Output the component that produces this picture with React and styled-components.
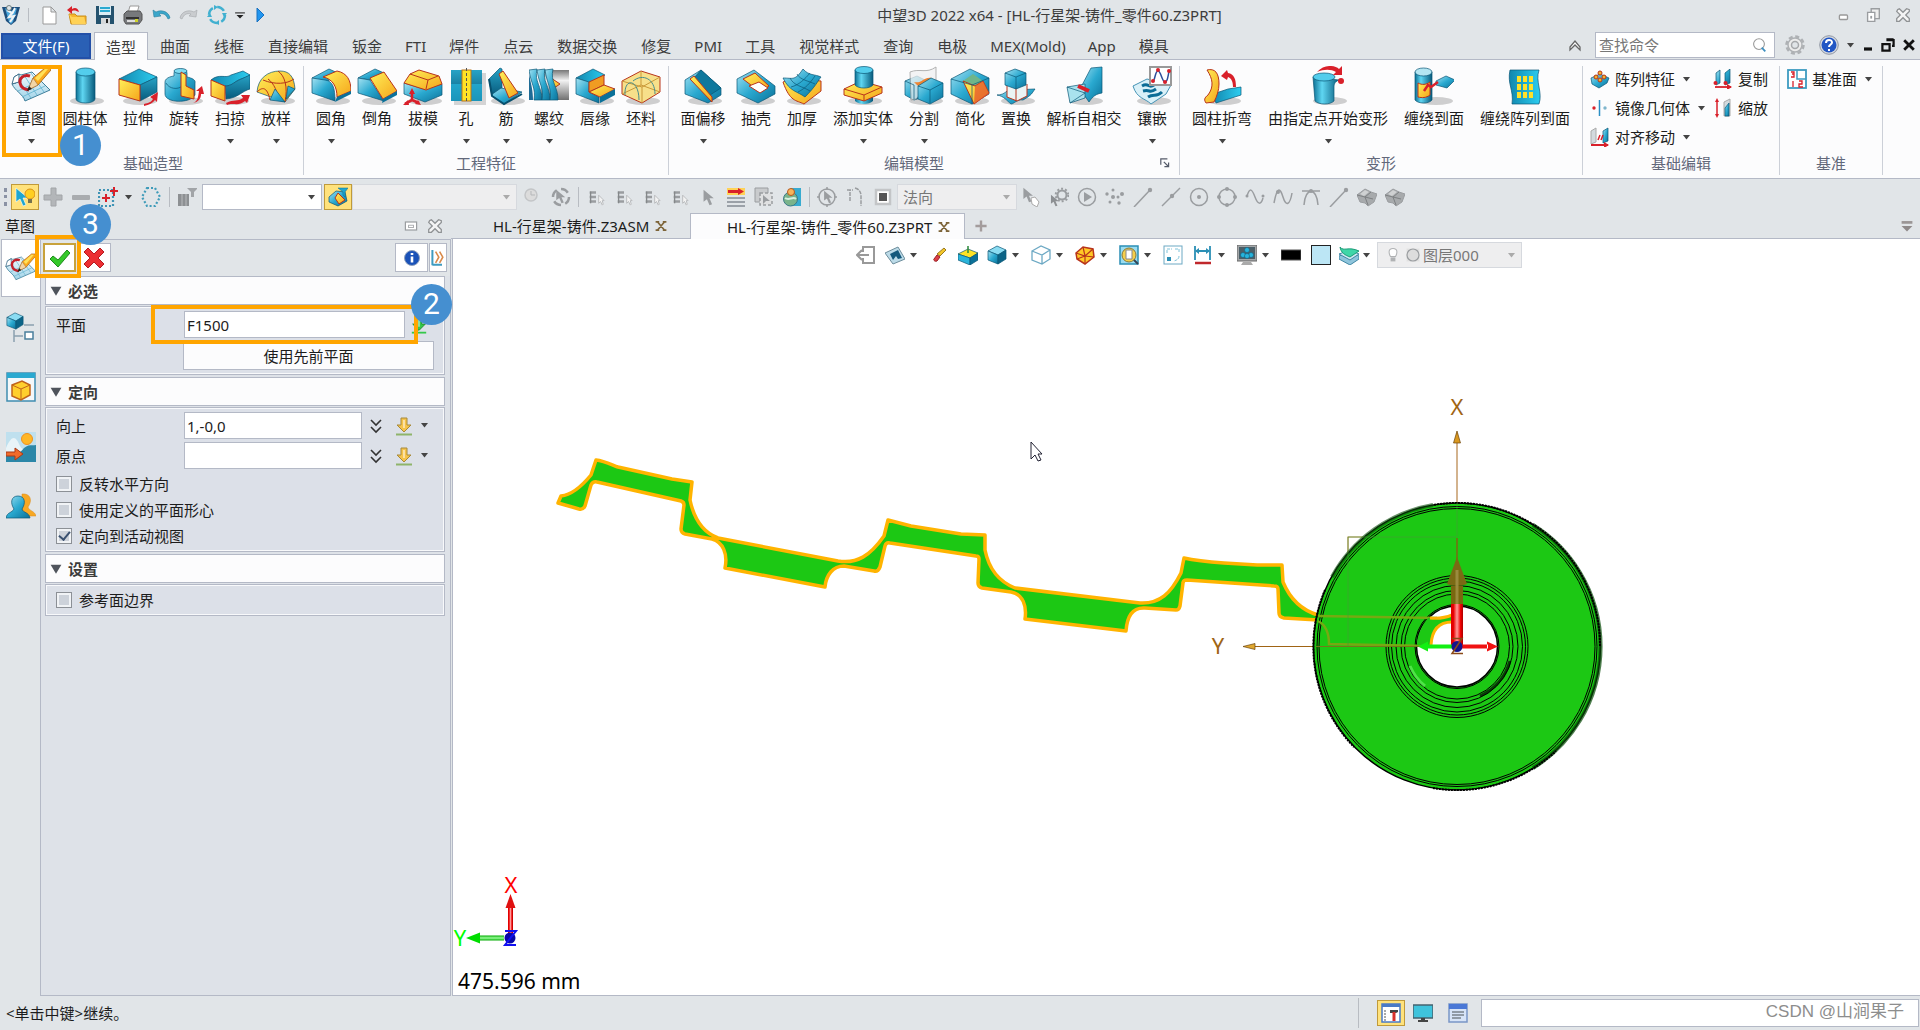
import React, { useState } from 'react'
import styled, { createGlobalStyle, css } from 'styled-components'

const GlobalStyle = createGlobalStyle`
    * { box-sizing: border-box; }
    body {
        margin: 0;
        font-family: "Noto Sans", "Noto Sans CJK SC", sans-serif;
        font-size: 15px;
        line-height: 20px;
        color: #1c1c1c;
        background: #e1e5e8;
    }
    button, input, select { font: inherit; color: inherit; }
    svg { display: block; flex: none; }
`

const line = '#b4b9c6'

const Page = styled.div`
    display: flex;
    flex-direction: column;
    height: 100vh;
    overflow: hidden;
`

const PlainButton = styled.button`
    display: flex;
    align-items: center;
    justify-content: ${p => (p.$start ? 'flex-start' : 'center')};
    flex: none;
    width: ${p => p.$w || 28}px;
    height: 26px;
    padding: 0;
    border: 0;
    background: none;
    ${p => p.$active && css`
        background: #ffe27c;
        border: 1px solid #c09a3a;
    `}
`

const TitleBar = styled.header`
    display: flex;
    align-items: center;
    height: 32px;
    flex: none;
    padding: 0 2px 2px 0;
`
const Title = styled.h1`
    flex: 1;
    margin: 0;
    font-size: 15px;
    font-weight: 400;
    text-align: center;
    color: #3c3c3c;
`
const Divider = styled.span`
    flex: none;
    width: 1px;
    height: ${p => p.$h || 20}px;
    margin: 0 ${p => p.$m || 2}px;
    background: #b8bcc2;
`

const MenuRow = styled.nav`
    display: flex;
    height: 28px;
    flex: none;
    border-bottom: 1px solid ${line};
`
const FileTab = styled.button`
    width: 90px;
    margin: 1px 3px 0 1px;
    padding: 0;
    color: #fff;
    background: #2a60b5;
    border: 2px solid #2350a8;
`
const MenuTab = styled.button`
    height: 28px;
    flex: none;
    padding: 0 ${p => (p.$latin ? 11 : 12)}px;
    color: #3c3c3c;
    background: none;
    border: 0;
    ${p => p.$active && css`
        padding: 0 11px;
        background: #fcfcfd;
        border: 1px solid ${line};
        border-bottom: 0;
    `}
`
const Spacer = styled.span`
    flex: 1;
`
const SearchBox = styled.label`
    display: flex;
    align-items: center;
    flex: none;
    width: 180px;
    height: 26px;
    margin: 0 6px;
    padding: 0 6px 0 3px;
    background: #fff;
    border: 1px solid ${line};
    input {
        flex: 1;
        min-width: 0;
        padding: 0;
        border: 0;
        outline: 0;
        background: none;
    }
    input::placeholder { color: #777; opacity: 1; }
`
const HelpButton = styled(PlainButton)`
    gap: 8px;
    margin-left: 5px;
`

const Ribbon = styled.section`
    display: flex;
    height: 119px;
    flex: none;
    background: #fcfcfd;
    border-bottom: 1px solid ${line};
`
const Group = styled.div`
    display: flex;
    flex-direction: column;
    position: relative;
    flex: none;
    margin: 6px 0 3px;
    padding: 0 4px 0 ${p => p.$pl || 4}px;
    border-right: 1px solid #ccd0d8;
`
const GroupTools = styled.div`
    display: flex;
    height: 87px;
`
const GroupName = styled.div`
    padding-right: ${p => (p.$corner ? 20 : 0)}px;
    text-align: center;
    color: #62687a;
`
const CornerButton = styled.button`
    position: absolute;
    right: 6px;
    bottom: 4px;
    padding: 2px;
    border: 0;
    background: none;
`
const BigButton = styled.button`
    display: flex;
    flex-direction: column;
    align-items: center;
    position: relative;
    width: ${p => p.$w}px;
    flex: none;
    padding: 0;
    border: 0;
    background: none;
    white-space: nowrap;
    line-height: 24px;
    & > svg:last-child { margin-top: 9px; }
`
const SmallGrid = styled.div`
    display: grid;
    grid-template-columns: ${p => p.$cols};
    grid-auto-rows: 26px;
    row-gap: 3px;
    align-content: start;
    padding-left: 3px;
`
const SmallButton = styled.button`
    display: flex;
    align-items: center;
    gap: 5px;
    padding: 0;
    border: 0;
    background: none;
    white-space: nowrap;
    & > svg:nth-child(3) { margin-left: 3px; }
`

const ToolRow = styled.div`
    display: flex;
    align-items: center;
    height: 34px;
    flex: none;
    padding: 2px 0 0 4px;
`
const Grip = styled.span`
    width: 0;
    height: 18px;
    margin-right: 4px;
    border-left: 3px dotted #8a92a4;
`
const SelectBox = styled.span`
    display: flex;
    align-items: center;
    flex: none;
    width: ${p => p.$w}px;
    height: 26px;
    padding: 0 6px 0 3px;
    margin: 0 ${p => p.$mr || 0}px 0 0;
    background: ${p => (p.$off ? '#eeeeef' : '#fff')};
    border: 1px solid ${p => (p.$off ? '#d6d9de' : line)};
    color: #777;
    select {
        flex: 1;
        min-width: 0;
        padding: 0;
        margin-left: 2px;
        appearance: none;
        border: 0;
        outline: 0;
        background: none;
        opacity: 1;
        color: #777;
    }
`

const Main = styled.main`
    display: flex;
    flex: 1;
    min-height: 0;
`
const Side = styled.aside`
    display: flex;
    flex-direction: column;
    width: 451px;
    flex: none;
`
const SideHead = styled.div`
    display: flex;
    align-items: center;
    height: 26px;
    flex: none;
    padding: 0 4px 0 5px;
`
const SideBody = styled.div`
    display: flex;
    flex: 1;
    min-height: 0;
`
const IconRail = styled.div`
    display: flex;
    flex-direction: column;
    width: 39px;
    flex: none;
    margin-left: 1px;
`
const RailButton = styled.button`
    display: flex;
    align-items: center;
    justify-content: center;
    height: ${p => (p.$active ? 58 : 60)}px;
    padding: 0;
    background: none;
    border: 0;
    ${p => p.$active && css`
        background: #fff;
        border: 1px solid ${line};
        border-right: 0;
    `}
`
const Panel = styled.div`
    flex: 1;
    min-width: 0;
    padding: 0 5px 0 4px;
    background: #dee2e8;
    border: 1px solid ${line};
`
const PanelBar = styled.div`
    display: flex;
    gap: 1px;
    align-items: center;
    height: 36px;
    margin: 0 -5px 0 -4px;
    padding: 0 3px 1px 2px;
    background: #e1e5e8;
`
const BoxButton = styled.button`
    display: flex;
    align-items: center;
    justify-content: center;
    position: relative;
    width: ${p => p.$w}px;
    height: 29px;
    padding: 0;
    background: #fff;
    border: ${p => (p.$hot ? '2px solid #c8a23c' : `1px solid ${line}`)};
`
const SectionHead = styled.button`
    display: flex;
    align-items: center;
    gap: 6px;
    width: 100%;
    height: 29px;
    padding: 0 4px;
    background: #fcfcfd;
    border: 1px solid ${line};
    font-weight: 700;
    color: #3c3c3c;
`
const SectionBody = styled.div`
    display: flex;
    flex-direction: column;
    gap: 3px;
    margin: 1px 0 2px;
    padding: ${p => p.$pad || '4px 10px'};
    background: #dce0e8;
    border: 1px solid ${line};
    box-shadow: inset 0 0 0 1px #f8f9fb;
`
const Field = styled.div`
    display: flex;
    align-items: center;
    position: relative;
    label {
        width: 128px;
        flex: none;
    }
`
const TextInput = styled.input`
    width: ${p => p.$w}px;
    height: 27px;
    padding: 0 2px;
    background: #fff;
    border: 1px solid ${line};
    outline: 0;
`
const WideButton = styled.button`
    height: 29px;
    margin: 0 0 0 127px;
    background: #fcfcfd;
    border: 1px solid ${line};
`
const Checks = styled.div`
    margin: -1px 0 -2px;
`
const Check = styled.label`
    display: flex;
    align-items: center;
    gap: 7px;
    height: 26px;
    input {
        display: grid;
        place-items: center;
        width: 16px;
        height: 16px;
        margin: 0;
        appearance: none;
        background: #cdd2da;
        border: 1px solid #8c9096;
        box-shadow: inset 0 0 0 2px #f1f3f6;
    }
    input:checked::after {
        content: "";
        width: 5px;
        height: 9px;
        margin-bottom: 3px;
        border: solid #3a5070;
        border-width: 0 2px 2px 0;
        transform: rotate(40deg);
    }
`

/* step highlights drawn over the controls */
const Highlight = styled.span`
    position: absolute;
    left: ${p => p.$l}px;
    top: ${p => p.$t}px;
    width: ${p => p.$w}px;
    height: ${p => p.$h}px;
    border: 4px solid #ffa500;
    pointer-events: none;
    z-index: 1;
`
const Step = styled.span`
    position: absolute;
    left: ${p => p.$l}px;
    top: ${p => p.$t}px;
    width: 41px;
    height: 41px;
    border-radius: 50%;
    background: #458fd0;
    color: #fff;
    font: 30px/40px Roboto, sans-serif;
    text-align: center;
    z-index: 2;
`

const Work = styled.div`
    display: flex;
    flex-direction: column;
    flex: 1;
    min-width: 0;
`
const DocTabs = styled.div`
    display: flex;
    height: 26px;
    flex: none;
    border-bottom: 1px solid ${line};
`
const DocTab = styled.div`
    display: flex;
    align-items: center;
    gap: 6px;
    height: 26px;
    flex: none;
    width: ${p => p.$w}px;
    padding-left: ${p => p.$pl}px;
    white-space: nowrap;
    button { height: 20px; width: 12px; }
    ${p => p.$active && css`
        background: #fcfcfd;
        border: 1px solid ${line};
        border-bottom: 0;
    `}
`
const DocLink = styled.a`
    color: #1c1c1c;
    text-decoration: none;
`
const Canvas = styled.div`
    position: relative;
    flex: 1;
    min-height: 0;
    overflow: hidden;
    margin-left: 1px;
    background: #fff;
    border-bottom: 1px solid ${line};
    border-left: 1px solid ${line};
`
const Scene = styled.svg`
    width: 100%;
    height: 100%;
    font-family: "Noto Sans", sans-serif;
`
const ViewBar = styled.div`
    display: flex;
    align-items: center;
    position: absolute;
    left: 398px;
    top: 3px;
`

const StatusBar = styled.footer`
    display: flex;
    align-items: center;
    height: 34px;
    flex: none;
    padding: 0 1px 0 6px;
`
const StatusInput = styled.label`
    position: relative;
    width: 438px;
    height: 28px;
    margin-left: 6px;
    background: #fff;
    border: 1px solid ${line};
    input {
        width: 100%;
        height: 100%;
        border: 0;
        outline: 0;
        background: none;
    }
`
const Watermark = styled.span`
    position: absolute;
    right: 14px;
    top: 0;
    font: 17px/24px "Liberation Sans", "Noto Sans CJK SC", sans-serif;
    color: #8d8d8d;
`

/* ---------- icons ---------- */

const Defs = () => (
    <svg width="0" height="0" style={{ position: 'absolute' }} aria-hidden="true">
        <defs>
            <linearGradient id="bl" x1="0" y1="0" x2="1" y2="1">
                <stop offset="0" stopColor="#a5e2f2" /><stop offset=".5" stopColor="#2aa9d0" /><stop offset="1" stopColor="#0b7199" />
            </linearGradient>
            <linearGradient id="bt" x1="0" y1="0" x2="1" y2="0">
                <stop offset="0" stopColor="#1287ae" /><stop offset="1" stopColor="#2ccdf0" />
            </linearGradient>
            <linearGradient id="bd" x1="0" y1="0" x2="0" y2="1">
                <stop offset="0" stopColor="#28a3c6" /><stop offset="1" stopColor="#075a7c" />
            </linearGradient>
            <linearGradient id="cy" x1="0" y1="0" x2="1" y2="0">
                <stop offset="0" stopColor="#0b6f93" /><stop offset=".35" stopColor="#5fd6f2" /><stop offset="1" stopColor="#075a7c" />
            </linearGradient>
            <linearGradient id="ye" x1="0" y1="0" x2="1" y2="1">
                <stop offset="0" stopColor="#fff05a" /><stop offset="1" stopColor="#f5a51a" />
            </linearGradient>
            <linearGradient id="gr" x1="0" y1="0" x2="0" y2="1">
                <stop offset="0" stopColor="#777" /><stop offset=".35" stopColor="#f2f2f2" /><stop offset="1" stopColor="#707070" />
            </linearGradient>
            <linearGradient id="pa" x1="0" y1="0" x2="0" y2="1">
                <stop offset="0" stopColor="#f4fafd" /><stop offset="1" stopColor="#9fd3e8" />
            </linearGradient>
            <linearGradient id="rd" x1="0" y1="0" x2="1" y2="0">
                <stop offset="0" stopColor="#d00" /><stop offset=".2" stopColor="#e80000" /><stop offset=".5" stopColor="#ff9a9a" /><stop offset=".8" stopColor="#f00000" /><stop offset="1" stopColor="#a00" />
            </linearGradient>
            <linearGradient id="gn" x1="0" y1="0" x2="0" y2="1">
                <stop offset="0" stopColor="#0a0" /><stop offset=".5" stopColor="#9f9" /><stop offset="1" stopColor="#0a0" />
            </linearGradient>
        </defs>
    </svg>
)

const shadow = <ellipse cx="22" cy="35" rx="17" ry="4" fill="#777" opacity=".35" />
const ed = { stroke: '#0a5676', strokeWidth: '.7', strokeLinejoin: 'round' }
const re = { stroke: '#b8341c', strokeWidth: '1', strokeLinejoin: 'round' }

const pencil = (
    <>
        <path d="M3 11l5-3 2 1 11-3 18 18-25 11c-2-7-10-10-13-17l4-1z" fill="url(#pa)" stroke="#3f7f9b" />
        <path d="M3 11l5-3v8l-7 2z" fill="#fff" stroke="#3f6f8b" />
        <path d="M7 25l21-10M11 31l23-11M13 9l13 20M10 17l10 15M20 7l13 19" stroke="#5fb2cf" strokeWidth=".8" fill="none" />
        <path d="M19 10c-6-2-11 2-10 7 1 5 4 6 9 7" stroke="#c4202a" strokeWidth="3" fill="none" />
        <path d="M17 24l5-12 12-10h6l0 2-13 15z" fill="#f9a81e" stroke="#a55f12" strokeWidth=".8" />
        <path d="M24 12l10-9h3L27 15z" fill="#ffe15a" />
        <path d="M17 24l5-12 5 7z" fill="#f3d5a5" stroke="#8c6138" strokeWidth=".5" /><path d="M16 25l2-5 3 3z" fill="#222" />
    </>
)

const big = {
    sketch: pencil,
    cylinder: <>{shadow}<path d="M11 6v27a9.500 4 0 0 0 19 0V6z" fill="url(#cy)" {...ed} /><ellipse cx="20.500" cy="6" rx="9.500" ry="4" fill="#53cdec" {...ed} /></>,
    extrude: <>{shadow}<path d="M1 13l20-10 18 8-17 8z" fill="url(#bt)" {...ed} /><path d="M22 19l17-8v15L22 35z" fill="url(#bd)" {...ed} /><path d="M1 13l21 6v16L1 29z" fill="url(#ye)" {...re} /><path d="M26 38c5-1 7-2 9-5l-3-2 8-5-1 10-2-2c-2 3-6 5-11 6z" fill="#d9202a" /></>,
    revolve: <>{shadow}<path d="M1 16c0-5 9-6 9-6V7c0-5 13-5 13 0v4c5 1 9 3 8 6v12c-5 9-30 8-30-1z" fill="url(#bl)" {...ed} /><path d="M2 17c3 6 12 7 16 3V10" fill="none" {...ed} /><ellipse cx="16.500" cy="5" rx="6.500" ry="2.500" fill="#7fdbf1" {...ed} /><path d="M17 6l5 3v11l8 4v9l-13-3z" fill="url(#ye)" {...re} /><path d="M29 37c5-2 5-6 6-12h-3l6-5 2 8h-3c0 5-3 8-8 9z" fill="#d9202a" /></>,
    sweep: <>{shadow}<path d="M1 14c8-7 15-1 20-5l12-4 7 4c-5 4-10 3-16 8-4 3-9 3-9 3z" fill="url(#bt)" {...ed} /><path d="M15 20c6 0 8-3 14-6l11-5v14c-8 2-12 9-24 10z" fill="url(#bd)" {...ed} /><path d="M1 14l14 6v15L1 30z" fill="url(#ye)" {...re} /><path d="M16 37c8-4 11-1 17-5l-2-3h9l-3 8-2-2c-7 6-12 1-18 4z" fill="#d9202a" /></>,
    loft: <>{shadow}<path d="M1 26C2 12 12 5 24 5c9 0 14 5 15 18L29 36z" fill="url(#ye)" {...ed} /><path d="M12 13c6 4 10 14 11 22M22 5c7 5 10 16 7 31M7 14c12 5 24 4 31-1M1 26c5-5 10-6 13 8" fill="none" {...re} /><path d="M14 34l5-11 10 13zM30 33l2-13 7 3z" fill="url(#bl)" {...ed} /></>,
    fillet: <>{shadow}<path d="M1 12L18 3l11 5-14 8z" fill="url(#bl)" {...ed} /><path d="M1 12l13 2c8 1 10 8 10 21L1 27z" fill="url(#bl)" {...ed} /><path d="M12 11l14-6c10 2 14 9 14 20l-14 6c0-10-4-18-14-20z" fill="url(#ye)" {...re} /><path d="M26 31l14-6v3L24 36z" fill="#0b7199" /></>,
    chamfer: <>{shadow}<path d="M1 12L18 3l9 4-14 7z" fill="url(#bl)" {...ed} /><path d="M1 12l12 2 14 21L1 27z" fill="url(#bl)" {...ed} /><path d="M13 12l14-6 13 19-14 8z" fill="url(#ye)" {...re} /><path d="M26 33l14-8v4L25 37z" fill="#0b7199" /></>,
    draft: <>{shadow}<path d="M1 17l20 6 18-5v11l-17 7-21-8z" fill="url(#bl)" {...ed} /><path d="M1 17L7 8l9-4 20 6 3 8-16 6z" fill="url(#ye)" {...re} /><path d="M7 8l18 6 10-4M25 14l-2 9" fill="none" {...re} /><path d="M9 25v9l-7 4M9 34l7 3" stroke="#d9202a" strokeWidth="2.600" fill="none" /><path d="M6 28l3-6 3 6zM0 39l5-5 1 5zM18 39l-6-1 3-4z" fill="#d9202a" /></>,
    hole: <><rect x="8" y="7" width="32" height="32" fill="#999" opacity=".4" /><rect x="5" y="4" width="31" height="31" fill="url(#bd)" /><rect x="5" y="18" width="31" height="17" fill="#28bce4" opacity=".6" /><rect x="16" y="4" width="9" height="31" fill="#ffe326" stroke="#b8741c" /><path d="M20.500 2v35" stroke="#555" strokeDasharray="3 2" /></>,
    rib: <>{shadow}<path d="M3 13L14 2l2 1v20l-10 7z" fill="url(#bd)" {...ed} /><path d="M5 29l10-7 21 4-18 12z" fill="url(#bl)" {...ed} /><path d="M13 8l4-3 15 22-9 5z" fill="url(#ye)" {...re} /><path d="M3 13l3 17 12 8 18-10" fill="none" stroke="#07506e" strokeWidth="2" /></>,
    thread: <><rect x="12" y="4" width="28" height="30" fill="url(#gr)" /><path d="M22 12l9 6-9 6z" fill="url(#ye)" {...re} />{[0, 8, 16].map(x => <path key={x} d={`M${x} 4c2 14 7 18 5 30h8c0-14-8-18-5-31z`} fill="url(#bl)" {...ed} />)}<path d="M0 8v26h4c0-10-2-16-4-26z" fill="#1f6c96" /></>,
    lip: <>{shadow}<path d="M1 12L18 3l12 6-15 8z" fill="url(#bt)" {...ed} /><path d="M1 12l13 4v10l10 5v6L1 28z" fill="url(#bl)" {...ed} /><path d="M14 16l15-7v10l-15 7z" fill="#f09c22" {...re} /><path d="M14 26l15-7 11 4-15 8z" fill="url(#ye)" {...re} /><path d="M25 31l15-8v6l-15 8z" fill="#0b7199" /></>,
    stock: <>{shadow}<path d="M1 15L20 5l19 6v15L21 37 1 28z" fill="#f7e08a" {...re} /><path d="M1 15l20 6 18-10M21 21v16M20 5v14L1 28M20 19l19 7" fill="none" stroke="#c99838" /><path d="M4 29c-1-18 14-16 14 5M12 15c10-8 22-2 22 13" fill="none" stroke="#478d8b" /></>,
    offset: <>{shadow}<path d="M2 14L18 4l20 18v7L25 37 2 28z" fill="url(#bl)" {...ed} /><path d="M18 4l20 18-11 7-16-17z" fill="#0e789d" {...ed} /><path d="M7 13l4-3 18 21v5z" fill="url(#ye)" {...re} /></>,
    shell: <>{shadow}<path d="M1 13L18 4l21 16v8L22 37 1 27z" fill="url(#bl)" {...ed} /><path d="M7 13l12-6 14 13-9 6z" fill="url(#ye)" {...re} /><path d="M13 20l10-4 9 6-8 5z" fill="#fff" {...re} /></>,
    thicken: <>{shadow}<path d="M1 16c10-4 15 4 20-8 8 6 8 6 18 7v10L22 38C14 34 8 36 1 16z" fill="url(#ye)" {...re} /><path d="M1 12c10 0 12 3 20-9 6 7 12 5 18 8-4 5-5 9-16 20C15 25 8 26 1 12z" fill="url(#bl)" {...ed} /><path d="M8 12c4 8 12 8 20 13M15 8c3 6 12 7 18 10M9 21c8-2 14-8 19-14M16 26c8-4 12-9 17-16" fill="none" {...ed} /></>,
    addbody: <>{shadow}<path d="M12 30h18v5c-4 4-14 4-18 0z" fill="url(#cy)" /><path d="M1 23l17-8 21 6v6l-18 8-20-6z" fill="url(#ye)" {...re} /><path d="M1 23l20 6 18-8M21 29v6" fill="none" {...re} /><path d="M12 4v15c3 4 15 4 18 0V4z" fill="url(#cy)" {...ed} /><ellipse cx="21" cy="4" rx="9" ry="3.500" fill="#53cdec" {...ed} /></>,
    split: <>{shadow}<path d="M1 15l12-5 10 5v15L10 34 1 29z" fill="url(#bl)" {...ed} /><path d="M6 6c10-4 16 2 26-5v20c-6 8-12 2-20 12l-5 1z" fill="#f1f1f1" opacity=".75" stroke="#999" /><path d="M10 16c8 2 10-6 18-4l-8 6-6 2z" fill="#ee8330" /><path d="M14 20l13-8 12 5v14l-13 7-12-5z" fill="url(#bl)" {...ed} /><path d="M14 20l12 4 13-7M26 24v13M1 15l9 4v14" fill="none" {...ed} /></>,
    simplify: <>{shadow}<path d="M1 13L20 3l19 9v16L22 38 1 28z" fill="url(#bl)" {...ed} /><path d="M13 15l10-7 10 7-8 5z" fill="#6fb58a" /><path d="M13 15l12 5 8-5 6 12-15 11z" fill="url(#ye)" {...re} /><path d="M25 20l-1 18 15-10-6-13z" fill="#e3502c" opacity=".7" /><path d="M1 13l21 6 17-7M22 19v19" fill="none" {...ed} /></>,
    replace: <>{shadow}<path d="M1 29c9 0 9-6 15-5l23-1c-3 4-3 6-12 11-6-1-9 4-12 4-4-3-7-8-14-9z" fill="url(#bl)" {...ed} /><path d="M11 19v12l10 4 10-5V18" fill="#eaf4f5" {...re} /><path d="M20 21v14" {...re} /><path d="M9 7l10-4 11 4v12l-10 4-11-4z" fill="url(#bl)" {...ed} /><path d="M9 7l11 4 10-4M20 11v12" fill="none" {...ed} /></>,
    selfx: <>{shadow}<path d="M27 2l11-1v26c-6 1-9 3-13 9l-9-13z" fill="url(#bl)" {...ed} /><path d="M3 21l18-3v14L6 37z" fill="#a9e2ee" {...ed} /><path d="M3 21l18 6L6 37" fill="none" {...ed} /><path d="M14 20l11 5" stroke="#d9202a" strokeWidth="4" /></>,
    mosaic: <>{shadow}<path d="M1 20l14-7 24 6-5 9-15 10C13 32 5 33 1 20z" fill="#d9f0f8" stroke="#4593b5" /><path d="M10 20c7-4 6 3 12-1M11 25c8-2 6 3 13-2M16 31c6-4 8 1 14-5" stroke="#0c6c96" strokeWidth="3" fill="none" /><rect x="18" y="1" width="21" height="18" fill="#fff" stroke="#999" strokeWidth="2" /><path d="M21 15c2 0 2-10 5-10s4 11 7 11 3-8 4-10" fill="none" stroke="#2d4f9a" strokeWidth="1.500" /><circle cx="21" cy="15" r="2" fill="#d9202a" /><circle cx="26" cy="4" r="2" fill="#d9202a" /><circle cx="37" cy="5" r="2" fill="#d9202a" /><circle cx="33" cy="16" r="2" fill="#d9202a" /></>,
    bend: <>{shadow}<path d="M11 28l15-5 13-2v8l-25 8z" fill="url(#bt)" {...ed} /><path d="M5 4c8-2 12 3 12 14 0 6-2 12-5 18l-8 1c-2-3-2-5 2-8 6-8 5-16-1-25z" fill="url(#ye)" {...re} /><path d="M19 10l6-6 1 3c6 1 8 6 8 14h-3c0-6-2-9-5-10l-1 3z" fill="#d9202a" /></>,
    morph: <>{shadow}<path d="M5 11l26 3c-5 2-5 5-5 8v13c-4 4-15 4-19 0z" fill="url(#cy)" {...ed} /><ellipse cx="16" cy="11" rx="11" ry="4" fill="#53cdec" {...ed} /><path d="M9 6c7-8 18-7 22-3l3-3v9h-9l3-3C23 3 16 3 9 6z" fill="#d9202a" /><circle cx="33" cy="15" r="3" fill="#d9202a" /></>,
    wrap: <>{shadow}<path d="M1 6v28c3 4 14 4 17 0V6z" fill="url(#cy)" {...ed} /><ellipse cx="9.500" cy="6" rx="8.500" ry="4" fill="#b4e6f2" {...ed} /><path d="M4 17c4 2 8 2 12-1v13c-4 3-8 3-12 2z" fill="url(#ye)" {...re} /><path d="M22 15l10-5 9 4-8 8-11-3z" fill="url(#bl)" {...ed} /><path d="M10 25l4-6 3 2 7-5" stroke="#d9202a" strokeWidth="2.500" fill="none" /></>,
    wraparr: <><path d="M5 4h29c-4 12 4 22 0 34H7C9 24 2 18 5 4z" fill="url(#bt)" {...ed} />{[10, 18, 26].map(y => [12, 18, 24].map(x => <rect key={x + '-' + y} x={x} y={y} width="4" height="6" fill="#ffe02a" />))}</>,
}

const Big = ({ name }) => <svg width="40" height="40" viewBox="0 0 40 40">{big[name]}</svg>

const cube = (top, left, right) => (
    <><path d="M1 6l9-5 9 4-8 5z" fill={top} {...ed} /><path d="M1 6l10 4v9L1 15z" fill={left} {...ed} /><path d="M11 10l8-5v9l-8 5z" fill={right} {...ed} /></>
)
const g = '#9a9da0'
const gl = { stroke: g, strokeWidth: 1.5, fill: 'none' }
const cursorPath = 'M3 1v14l4-3 3 7 3-1-3-7h5z'
const listCursor = <><path d="M3 5h7M3 10h7M3 15h7" stroke="#9a9da0" strokeWidth="3" /><path d="M4 4v13" stroke="#85888a" strokeWidth="1.500" /><path d="M13 8v9l2-2 2 4 1-1-1-4h2z" fill="#f3f3f3" stroke="#b5b8ba" /></>
const arrowDown = c => <><path d="M7 2h6v7h4l-7 7-7-7h4z" fill={c} stroke={c === '#35c94a' ? '#1d8a2c' : '#a88a3a'} /><path d="M9 4h2v8H9z" fill="#fff" opacity=".5" /><path d="M2 18.500h16" stroke={c === '#35c94a' ? '#35c94a' : '#8fb46a'} strokeWidth="2" /></>

// 20x20 icons
const small = {
    logo: <><path d="M1 2h18l-4 14-5 4-5-4z" fill="#1f4f7d" /><path d="M4 3l6 3 6-3-4 14-2 2-2-2z" fill="#49a6dc" /><path d="M6 5l5 3-3 4 5-1-4 6" stroke="#eef2f4" strokeWidth="2.200" fill="none" /><circle cx="8" cy="3" r="2.500" fill="#dfe5e8" stroke="#566" strokeWidth=".8" /><path d="M14 3l-3 6" stroke="#f3f6f8" strokeWidth="2" /></>,
    file: <path d="M4 2h8l5 5v12H4zM12 2v5h5" fill="#fff" stroke="#999" />,
    open: <><path d="M2 9h6l2 2h9v8H4z" fill="#f8b62c" stroke="#c98f1a" /><path d="M2 9l3 10h14l-2-7H5" fill="#ffd257" /><path d="M12 7C11 3 8 2 5 4V1L0 5l5 4V6c3-1 4 0 7 1z" fill="#d9202a" /></>,
    save: <><path d="M1 1h18v18H1z" fill="#24526e" /><path d="M4 1h12v9H4z" fill="#d9ecf4" /><path d="M5 3h10M5 6h10" stroke="#2aa9d0" strokeWidth="2" /><path d="M6 13h9v6H6z" fill="#d5d8da" /><path d="M11 14h2v4h-2z" fill="#222" /></>,
    print: <><path d="M7 1h9l-2 7H5z" fill="#fff" stroke="#999" /><path d="M1 9l3-3h13l2 3v6l-3 4H3l-2-3z" fill="#77797c" stroke="#555" /><path d="M3 12h13v2H3z" fill="#333" /><path d="M4 16h10" stroke="#ddd" strokeWidth="2" /><path d="M12 14h3v3h-3z" fill="#cfd328" /></>,
    undo: <path d="M2 5l1 7 7-1-2-2c4-1 7 0 9 5l2-1C18 7 11 4 5 7z" fill="#3ba6ca" stroke="#2a7f9e" strokeWidth=".6" />,
    redo: <path d="M18 5l-1 7-7-1 2-2c-4-1-7 0-9 5l-2-1C2 7 9 4 15 7z" fill="#c9cccf" stroke="#a5a8ab" strokeWidth=".6" />,
    cycle: <><circle cx="10" cy="10" r="8" fill="none" stroke="#41b0d0" strokeWidth="2.500" strokeDasharray="8 4.570" /><path d="M7 0l4 2-4 3zM20 8l-3 4-2-4zM12 20l-4-2 4-3zM0 12l3-4 2 4z" fill="#41b0d0" /></>,
    more: <><path d="M3 7h14" stroke="#222" strokeWidth="1.500" /><path d="M5 10h10l-5 5z" fill="#222" /></>,
    play: <path d="M7 3l7 7-7 7z" fill="#2196f0" stroke="#1670c0" />,
    min: <rect x="6" y="10" width="9" height="5" rx="1" fill="#fff" stroke="#999" strokeWidth="1.500" />,
    restore: <><path d="M8 3h9v11H8z" fill="#eee" stroke="#9a9da0" strokeWidth="1.500" /><path d="M4 7h8v10H4z" fill="#fff" stroke="#9a9da0" strokeWidth="1.500" /><path d="M7 11h2v3H7z" fill={g} /></>,
    close: <path d="M4 4l2-1 4 4 4-4 3 1v2l-4 4 4 4v3h-3l-4-4-4 4H3v-3l4-4-4-4z" fill="#f4f4f4" stroke="#8f9294" strokeWidth="1.400" />,
    mdimin: <path d="M5 15h10" stroke="#111" strokeWidth="4" />,
    mdirest: <path d="M8 4h9v7h-2M3 9h9v8H3zM8 3h9M3 9h9" fill="none" stroke="#111" strokeWidth="2.800" />,
    mdiclose: <path d="M4 4l12 12M16 4L4 16" stroke="#111" strokeWidth="3.500" />,
    up: <><path d="M5 12l5-6 5 6v3l-5-5-5 5z" fill="#fff" stroke="#666" strokeWidth="1.300" /></>,
    search: <><circle cx="10" cy="9" r="6" fill="none" stroke="#999" strokeWidth="1.200" /><path d="M13 13l4 4" stroke="#3d8fc0" strokeWidth="2" /></>,
    gear: <><circle cx="10" cy="10" r="8.500" fill="none" stroke="#aeb1b4" strokeWidth="2.500" strokeDasharray="4 2.670" /><circle cx="10" cy="10" r="7" fill="#ececec" stroke="#aeb1b4" strokeWidth="1.500" /><circle cx="10" cy="10" r="3.500" fill="#e1e5e8" stroke="#a6a8ab" strokeWidth="1.500" /></>,
    help: <><circle cx="10" cy="10" r="9.300" fill="#d3d7de" stroke="#9097a3" /><circle cx="10" cy="10" r="7.500" fill="#2156c4" /><path d="M7 8c0-4 6-4 6-.5 0 2-3 2-3 4.500M10 14v2" stroke="#fff" strokeWidth="2" fill="none" /></>,
    patt: <><path d="M1 9l9-4 9 4-2 5-8 5-7-4z" fill="url(#bl)" {...ed} /><g fill="#f6b325" stroke="#b8341c"><circle cx="10" cy="4" r="2" /><circle cx="6" cy="8" r="2" /><circle cx="14" cy="8" r="2" /><circle cx="10" cy="11" r="2" /></g></>,
    copy: <><path d="M3 4l4-3v13l-4 2zM12 4l5-4v14l-5 2z" fill="url(#bl)" {...ed} /><circle cx="2.500" cy="14" r="2" fill="#d9202a" /><circle cx="12.500" cy="14" r="2" fill="#d9202a" /><path d="M2 18h16" stroke="#d9202a" strokeWidth="1.800" /><path d="M14 15l5 3-5 3z" fill="#d9202a" /></>,
    mirror: <><path d="M9.500 2v16" stroke="#2b8fc4" strokeWidth="1.500" /><circle cx="4" cy="10" r="1.700" fill="#d9202a" /><circle cx="15" cy="10" r="1.700" fill="#7fb5cc" /></>,
    scale: <><path d="M4 2v16" stroke="#d9202a" strokeWidth="1.500" /><path d="M2 4l2-4 2 4zM2 16l2 4 2-4z" fill="#d9202a" /><path d="M11 4l6-3v17h-6z" fill="#d3dade" stroke="#aaa" /><path d="M12 10l4-5v13h-4z" fill="url(#bl)" {...ed} /></>,
    align: <><path d="M1 4l5-3v14l-5 2z" fill="#d3dade" stroke="#aaa" /><path d="M13 4l5-3v13l-5 2z" fill="url(#bl)" {...ed} /><path d="M8 13l2-5M11 13l2-5" stroke="#d9202a" strokeWidth="1.500" /><path d="M1 18h17" stroke="#d9202a" strokeWidth="2" /><path d="M14 15l5 3-5 3z" fill="#d9202a" /></>,
    datum: <><rect x="1" y="1" width="18" height="18" fill="#fff" stroke="#3d9bc0" strokeWidth="1.800" /><path d="M10 1v9h9" stroke="#3d9bc0" strokeWidth="1.500" fill="none" /><path d="M4 3h3v2H5h2v3H4M6 12v6M12 12h3v3h-3v3h4" stroke="#d9202a" strokeWidth="1.300" fill="none" /></>,
    bulb: <><path d={cursorPath} fill="#1ea6cf" stroke="#fff" strokeWidth=".6" transform="translate(-2 0)" /><circle cx="15" cy="7" r="5" fill="#ffcf20" stroke="#d9901a" /><path d="M13 12h4v4h-4z" fill="#77734f" /></>,
    plus: <path d="M8 1h5v7h6v5h-6v6H8v-6H1V8h7z" fill="#b3b6b9" stroke="#a2a5a8" />,
    minus: <rect x="1" y="8" width="18" height="5" rx="1" fill="#a9acaf" />,
    pick: <><path d="M1 3h14v16H1z" fill="none" stroke="#3f93b5" strokeWidth="2.200" strokeDasharray="2 2" /><path d="M8 7v8M4 11h8M16 0v9M12 4h8" stroke="#d9202a" strokeWidth="2" /></>,
    poly: <path d="M6 1h8l5 9-5 9H6l-5-9z" fill="none" stroke="#3f9bb9" strokeWidth="2.200" strokeDasharray="2 2" />,
    filter: <><path d="M1 7h11v12H1z" fill="#8d9093" /><path d="M5 7v12M9 7v12" stroke="#b9bbbd" /><path d="M10 1h11l-4 4v5h-3V5z" fill="#a1a4a7" /></>,
    facef: <><path d="M1 10l7-6 9 1 2 9-9 5-9-4z" fill="url(#bl)" {...ed} /><path d="M7 11l3-5 7 7-6 4z" fill="url(#ye)" {...re} /><path d="M10 1h10l-3 4v5l-2-2V5z" fill="#1ea6cf" stroke="#0b6f93" strokeWidth=".5" /></>,
    clock: <><circle cx="9" cy="8" r="6" fill="#dcdcdc" stroke="#c3c5c7" strokeWidth="1.500" /><path d="M9 4v4h4" stroke="#b5b7b9" fill="none" /></>,
    rot: <><circle cx="10" cy="10" r="8" fill="none" stroke={g} strokeWidth="2.500" strokeDasharray="8 4.500" /><path d={cursorPath} fill={g} transform="translate(3 2) scale(.75)" /></>,
    lc: listCursor,
    cur: <path d={cursorPath} fill={g} transform="translate(3 2) scale(.85)" />,
    rows: <><path d="M1 1h18v7H1z" fill="#ffd257" /><path d="M2 4.500h11" stroke="#d9202a" strokeWidth="3" /><path d="M12 1l6 3.500-6 3.500z" fill="#d9202a" /><path d="M1 11h18M1 15h18M1 19h18" stroke="#9ba1a8" strokeWidth="1.800" /></>,
    win: <><path d="M1 1h13v14H1z" fill="#c9cbcd" stroke={g} /><path d="M6 6h12v12H6z" fill="#dfe0e1" stroke={g} strokeWidth="1.500" strokeDasharray="3 2" /><path d="M9 8v9l3-3h4z" fill={g} /></>,
    globe: <><path d="M9 1h10v18H9z" fill="#37abd0" /><circle cx="8.500" cy="12" r="7" fill="#79b38b" stroke="#3b7a88" /><path d="M3 11c4 3 8-2 11 1" stroke="#d8f0e0" strokeWidth="2" fill="none" /><circle cx="9" cy="5" r="3.500" fill="#f7b45a" stroke="#b8571c" /></>,
    curc: <><circle cx="10" cy="10" r="8" {...gl} /><path d={cursorPath} fill={g} transform="translate(5 3) scale(.7)" /><path d="M10 0v3M10 17v3M0 10h3M17 10h3" {...gl} /></>,
    chain: <path d="M5 14V3M2 3h6M10 1c4 1 6 4 6 8v10" {...gl} strokeDasharray="4 1" />,
    solid: <><rect x="3" y="3" width="14" height="14" fill="#fff" stroke="#c3c5c7" strokeWidth="2.500" /><rect x="6" y="6" width="8" height="8" fill="#555" /></>,
    curh: <><path d={cursorPath} fill={g} transform="scale(.8)" /><path d="M10 11l4-1 4 5-2 5-5-3z" fill="#fff" stroke="#aaa" /></>,
    gearc: <><circle cx="13" cy="8" r="4.500" fill="none" stroke={g} strokeWidth="2" /><circle cx="13" cy="8" r="6.300" fill="none" stroke={g} strokeWidth="2" strokeDasharray="2 2" /><path d={cursorPath} fill="#8d9093" transform="translate(0 7) scale(.65)" /></>,
    playc: <><circle cx="10" cy="10" r="8.500" {...gl} /><path d="M7 5l8 5-8 5z" fill={g} /></>,
    dots: <g fill={g}><circle cx="2" cy="7" r="1.700" /><circle cx="8" cy="3" r="1.500" /><circle cx="8" cy="10" r="2" /><circle cx="17" cy="7" r="2" /><circle cx="13" cy="10" r="1.500" /><circle cx="5" cy="15" r="1.500" /><circle cx="14" cy="16" r="1.700" /></g>,
    seg: <><path d="M1 20L17 3" {...gl} /><circle cx="17" cy="3" r="2.200" fill={g} /></>,
    segm: <><path d="M1 19L19 1" {...gl} /><circle cx="11" cy="9" r="2.200" fill={g} /></>,
    cdot: <><circle cx="10" cy="10" r="8.500" {...gl} /><circle cx="10" cy="10" r="2" fill={g} /></>,
    circ: <><circle cx="10" cy="10" r="8" {...gl} /><g fill={g}><circle cx="10" cy="2" r="2" /><circle cx="10" cy="18" r="2" /><circle cx="2" cy="10" r="2" /><circle cx="18" cy="10" r="2" /></g></>,
    wave: <><path d="M2 9C5 0 7 2 10 10s6 8 8 1" {...gl} /><circle cx="2" cy="9" r="1.500" fill={g} /><circle cx="18" cy="9" r="1.500" fill={g} /></>,
    wave2: <><path d="M1 16C4 0 7 0 10 10s7 8 9-4" {...gl} /><circle cx="5" cy="5" r="2" fill={g} /></>,
    tang: <><path d="M1 4h18M3 18C4 0 16 0 17 18" {...gl} /><circle cx="10" cy="4" r="2" fill={g} /></>,
    gem: <><path d="M0 8l8-6 6 3 6 2-3 8-6 4-3-3-5-1z" fill="#a7aaac" stroke={g} /><path d="M0 8l8 2 6-5M8 10l3 8M8 10l8 2" stroke="#7d8082" fill="none" /><path d="M3 7l5-4 4 2-5 4z" fill="#cfd1d2" /></>,
    undock: <><rect x="3" y="5" width="14" height="10" fill="#fff" stroke={g} strokeWidth="1.500" /><rect x="7" y="9" width="6" height="3" fill="#fff" stroke={g} /></>,
    info: <><circle cx="10" cy="10" r="7.500" fill="#1a52b8" stroke="#8ea0bd" /><path d="M10 5v2M10 8.500v6" stroke="#fff" strokeWidth="2.600" /></>,
    fold: <><path d="M3 0v19M3 18.500h12" stroke="#3f9bc0" strokeWidth="2.500" fill="none" /><path d="M7 2l4 7-4 7M12 2l4 7-4 7" stroke="#d98a4a" strokeWidth="2" fill="none" /></>,
    ok: <path d="M0 11l3-3 5 4 9-10 3 3L8 19z" fill="#35c92a" stroke="#1e8a1c" />,
    cancel: <path d="M0 4l4-4 6 6 6-6 4 4-6 6 6 6-4 4-6-6-6 6-4-4 6-6z" fill="#ec2f33" stroke="#b51a20" />,
    dbl: <path d="M5 4l5 5 5-5M5 11l5 5 5-5" fill="none" stroke="#333" strokeWidth="1.600" />,
    pin: arrowDown('#f5c34a'),
    pinok: arrowDown('#35c94a'),
    exit: <path d="M7 7V2h11v16H7v-5M1 10h12M6 5l-5 5 5 5" fill="none" stroke="#999" strokeWidth="2" />,
    plane: <><path d="M0 8l13-6 7 12-12 5z" fill="#bcdbe8" stroke="#6c8c9b" /><path d="M5 9l8-4 4 8-4 1-2-3-3 4z" fill="#14597c" /></>,
    erase: <><path d="M15 3l2 2-6 6-3-2z" fill="#f3c62a" stroke="#9a7a20" /><path d="M8 10l3 2-3 4c-2 1-4-1-3-2z" fill="#de3f46" stroke="#992025" /></>,
    ytop: <><path d="M0 9l10-5 10 4-8 5z" fill="#ffe326" {...ed} /><path d="M0 9l12 4v7L0 15z" fill="#2bb4da" {...ed} /><path d="M12 13l8-5v7l-8 5z" fill="#0b7199" {...ed} /><path d="M10 1v7" stroke="#2a8a3a" strokeWidth="1.500" /></>,
    bcube: cube('#8adcf2', 'url(#bl)', '#0b6487'),
    wcube: <path d="M1 6l9-5 9 4v9l-8 5-10-4zM1 6l10 4 8-5M11 10v9" fill="#fff" stroke="#6da9c4" strokeWidth="1.300" />,
    hex: <><path d="M1 8l7-6 10 2 1 8-9 7-8-5z" fill="#ffc926" stroke="#b8341c" strokeWidth="1.500" /><path d="M1 8l9 3 8-7M10 11v8M8 2l2 9 9 1M10 11l-8 3" stroke="#b8341c" strokeWidth="1.200" fill="none" /></>,
    zoomp: <><rect x="1" y="1" width="18" height="18" fill="#9adcf0" stroke="#2b8fb5" strokeWidth="1.500" /><circle cx="10" cy="10" r="7" fill="#f6cf4a" stroke="#8a7a3a" /><path d="M7 5h6v9H7z" fill="#fff" stroke="#888" /><path d="M15 15l4 4" stroke="#345" strokeWidth="2" /></>,
    fit: <><rect x="1" y="1" width="18" height="18" fill="#fff" stroke="#6da9c4" /><path d="M4 8V4h5M12 4h4v4M16 11c0 3-2 4-5 5" fill="none" stroke="#7fc3da" strokeDasharray="3 1" /><path d="M4 12h4v4H4z" fill="#2b8fb5" /></>,
    dim: <><path d="M2 1v14M17 1v14M3 6h13" stroke="#2b8fb5" strokeWidth="1.800" /><path d="M6 3L2 6l4 3zM13 3l4 3-4 3z" fill="#2b8fb5" /><path d="M2 18h16" stroke="#c0282c" strokeWidth="2.500" /></>,
    mon: <><rect x="0" y="0" width="20" height="16" fill="#a3a6a8" stroke="#666" /><rect x="2" y="2" width="16" height="12" fill="#4b5f68" /><g fill="#28b4dc" stroke="#0b5676" strokeWidth=".5"><circle cx="10" cy="5" r="2.500" /><circle cx="6" cy="10" r="2.500" /><circle cx="14" cy="10" r="2.500" /><circle cx="10" cy="11" r="2.500" /></g><path d="M6 17h8l2 3H4z" fill="#aaa" /></>,
    black: <rect x="0" y="5" width="20" height="10" fill="#000" stroke="#555" />,
    sky: <rect x=".5" y=".5" width="19" height="19" fill="#bce6f5" stroke="#222" />,
    layer: <><path d="M0 11l11-4 9 4v3l-9 6-11-6z" fill="#8fc5dc" stroke="#3f87a5" /><path d="M0 9l11-4 9 4-9 6z" fill="#cfe8f1" stroke="#3f87a5" /><path d="M1 2c4 5 8-1 19 4l-9 6C6 10 2 8 1 2z" fill="#3fd6a8" stroke="#1f9c78" /></>,
    lamp: <><path d="M10 2c7 0 5 7 3 10H7C5 9 3 2 10 2z" fill="#fff" stroke="#b0b2b4" strokeWidth="1.300" /><path d="M7 13h6v5H7z" fill="#b0b2b4" /></>,
    ball: <><rect x="2" y="2" width="16" height="16" fill="#e0e0e0" /><circle cx="10" cy="10" r="7.500" fill="#ddd" stroke={g} strokeWidth="1.500" /></>,
    stTool: <><rect x="1" y="1" width="18" height="18" fill="#fff" stroke="#4a7ac6" strokeWidth="1.500" /><path d="M1 1h18v3H1z" fill="#4a7ac6" /><path d="M4 7v11" stroke="#555" strokeDasharray="2 1" /><path d="M9 7h8v2l-2 1H9z" fill="#444" /><path d="M11.500 9h3v9h-3z" fill="#d9302a" /></>,
    stMon: <><rect x="0" y="2" width="20" height="13" fill="#3fc3dc" stroke="#46636f" strokeWidth="1.500" /><path d="M8 15h4v2h3v2H5v-2h3z" fill="#444" /></>,
    stDoc: <><rect x="1" y="1" width="18" height="18" fill="#d7e4f7" stroke="#7a96c6" strokeWidth="1.500" /><path d="M1 1h18v5H1z" fill="#4a78d6" /><path d="M4 9h12M4 12h12M4 15h9" stroke="#7b828c" strokeWidth="1.500" /></>,
    tabx: <path d="M4 3l12 14M16 3L4 17M1 3h6M13 3h6M1 17h6M13 17h6" stroke="#7d6438" strokeWidth="2.800" />,
    add: <path d="M10 3v14M3 10h14" stroke="#a39c9c" strokeWidth="3" />,
    menu: <><path d="M4 6h12" stroke="#9a9595" strokeWidth="3" /><path d="M4 10h12l-6 6z" fill="#8f8a8a" /></>,
    corner: <path d="M3 13V3h11M8 8l7 7M16 9v7H9" fill="none" stroke="#555b6a" strokeWidth="2" />,
    tri: <path d="M1 3h18l-9 15z" fill="#4f545c" />,
}
const Ico = ({ name, s = 20 }) => <svg width={s} height={s} viewBox="0 0 20 20">{small[name]}</svg>
const Arrow = ({ c = '#444' }) => <svg width="7" height="5" viewBox="0 0 7 5"><path d="M0 0h7L3.500 4.500z" fill={c} /></svg>

const tree = {
    tree: <><g transform="scale(.9)">{cube('#8adcf2', 'url(#bl)', '#0b6487')}</g><path d="M18 13h10M8 18v12M8 24h9" stroke="#8aa0ae" strokeWidth="1.500" /><rect x="19" y="20" width="8" height="7" fill="#fff" stroke="#4a7f9c" strokeWidth="1.500" /></>,
    box: <><rect x="1" y="1" width="28" height="28" fill="#f4f8fa" stroke="#3f8db0" strokeWidth="1.500" /><path d="M1 1h28v5H1z" fill="#2aa9d0" /><path d="M6 13l10-4 8 4v10l-9 5-9-4z" fill="#ffcf2e" stroke="#c0641c" strokeWidth="1.500" /><path d="M6 13l9 4 9-4M15 17v11" stroke="#c0641c" fill="none" /></>,
    pict: <><rect width="30" height="30" fill="#bfe0ee" /><path d="M0 16c6-14 10-12 14-2 6 10 10-4 16 0v16H0z" fill="#e9f4f8" /><path d="M0 24c8-2 12 0 18-8 5-4 8-2 12-3v17H0z" fill="#2b87a8" /><circle cx="21" cy="7" r="5.500" fill="#ffb726" stroke="#ef9020" /><path d="M0 20h9v-4l8 6-8 6v-4H0z" fill="#f06a2a" stroke="#a83a18" /></>,
    user: <><path d="M16 2c8-1 11 6 6 13 1 4 7 4 8 9H16z" fill="#f7a823" stroke="#d98a1a" strokeWidth=".5" /><path d="M12 4c7 0 8 7 4 13 1 4 7 3 8 9H0c1-6 6-5 8-9C4 11 5 4 12 4z" fill="url(#bl)" {...ed} /></>,
}

/* ---------- data ---------- */

const menus = ['造型', '曲面', '线框', '直接编辑', '钣金', 'FTI', '焊件', '点云', '数据交换', '修复', 'PMI', '工具', '视觉样式', '查询', '电极', 'MEX(Mold)', 'App', '模具']

// label, icon, width, has drop-down
const groups = [
    { name: '基础造型', pl: 7, items: [['草图', 'sketch', 48, 1], ['圆柱体', 'cylinder', 60], ['拉伸', 'extrude', 46], ['旋转', 'revolve', 46], ['扫掠', 'sweep', 46, 1], ['放样', 'loft', 46, 1]] },
    { name: '工程特征', items: [['圆角', 'fillet', 46, 1], ['倒角', 'chamfer', 46], ['拔模', 'draft', 46, 1], ['孔', 'hole', 40, 1], ['筋', 'rib', 40, 1], ['螺纹', 'thread', 46, 1], ['唇缘', 'lip', 46], ['坯料', 'stock', 46]] },
    { name: '编辑模型', corner: true, items: [['面偏移', 'offset', 60, 1], ['抽壳', 'shell', 46], ['加厚', 'thicken', 46], ['添加实体', 'addbody', 76, 1], ['分割', 'split', 46, 1], ['简化', 'simplify', 46], ['置换', 'replace', 46], ['解析自相交', 'selfx', 90], ['镶嵌', 'mosaic', 46, 1]] },
    { name: '变形', items: [['圆柱折弯', 'bend', 76, 1], ['由指定点开始变形', 'morph', 136, 1], ['缠绕到面', 'wrap', 76], ['缠绕阵列到面', 'wraparr', 106]] },
]
const snapTools = ['curh', 'gearc', 'playc', 'dots', 'seg', 'segm', 'cdot', 'circ', 'wave', 'wave2', 'tang', 'seg', 'gem', 'gem']
// icon, slot width, has drop-down
const viewTools = [['exit', 29], ['plane', 30, 1], ['erase', 29], ['ytop', 29], ['bcube', 30, 1], ['wcube', 30, 1], ['hex', 30, 1], ['zoomp', 30, 1], ['fit', 30], ['dim', 30, 1], ['mon', 30, 1], ['black', 30], ['sky', 29], ['layer', 28, 1]]

/* ---------- parts ---------- */

const IconButton = ({ name, w, active, label, s }) => (
    <PlainButton $w={w} $active={active} aria-label={label || name}><Ico name={name} s={s} /></PlainButton>
)

const RibbonBar = () => (
    <Ribbon>
        {groups.map((group, i) => (
            <Group key={group.name} $pl={group.pl}>
                <GroupTools>
                    {group.items.map(([label, icon, w, drop]) => (
                        <BigButton key={label} $w={w}>
                            <Big name={icon} />
                            <span>{label}</span>
                            {drop && <Arrow />}
                        </BigButton>
                    ))}
                </GroupTools>
                <GroupName $corner={group.corner}>{group.name}</GroupName>
                {group.corner && <CornerButton aria-label="more"><Ico name="corner" s={12} /></CornerButton>}
                {i === 0 && <><Highlight $l={2} $t={-1} $w={60} $h={92} /><Step $l={60} $t={59}>1</Step></>}
            </Group>
        ))}
        <Group>
            <GroupTools>
                <SmallGrid $cols="123px 62px">
                    <SmallButton><Ico name="patt" /><span>阵列特征</span><Arrow /></SmallButton>
                    <SmallButton><Ico name="copy" /><span>复制</span></SmallButton>
                    <SmallButton><Ico name="mirror" /><span>镜像几何体</span><Arrow /></SmallButton>
                    <SmallButton><Ico name="scale" /><span>缩放</span></SmallButton>
                    <SmallButton><Ico name="align" /><span>对齐移动</span><Arrow /></SmallButton>
                </SmallGrid>
            </GroupTools>
            <GroupName>基础编辑</GroupName>
        </Group>
        <Group>
            <GroupTools>
                <SmallGrid $cols="91px">
                    <SmallButton><Ico name="datum" /><span>基准面</span><Arrow /></SmallButton>
                </SmallGrid>
            </GroupTools>
            <GroupName>基准</GroupName>
        </Group>
    </Ribbon>
)

const Section = ({ title, children, ...rest }) => (
    <section>
        <SectionHead><Ico name="tri" s={12} /><span>{title}</span></SectionHead>
        <SectionBody {...rest}>{children}</SectionBody>
    </section>
)

const SketchPanel = () => {
    const [plane, setPlane] = useState('F1500')
    const [up, setUp] = useState('1,-0,0')
    const [origin, setOrigin] = useState('')

    return (
        <Panel>
            <PanelBar>
                <BoxButton $w={33} $hot aria-label="ok">
                    <Ico name="ok" />
                    <Highlight $l={-10} $t={-10} $w={46} $h={43} />
                    <Step $l={25} $t={-41}>3</Step>
                </BoxButton>
                <BoxButton $w={34} aria-label="cancel"><Ico name="cancel" /></BoxButton>
                <Spacer />
                <BoxButton $w={33} aria-label="info"><Ico name="info" /></BoxButton>
                <BoxButton $w={18} aria-label="fold"><Ico name="fold" s={16} /></BoxButton>
            </PanelBar>
            <Section title="必选">
                <Field>
                    <label htmlFor="plane">平面</label>
                    <TextInput id="plane" $w={221} value={plane} onChange={e => setPlane(e.target.value)} />
                    <PlainButton $w={28} aria-label="pick plane"><Ico name="pinok" s={18} /></PlainButton>
                    <Highlight $l={95} $t={-6} $w={267} $h={39} />
                    <Step $l={355} $t={-27}>2</Step>
                </Field>
                <WideButton>使用先前平面</WideButton>
            </Section>
            <Section title="定向" $pad="4px 10px">
                <Field>
                    <label htmlFor="up">向上</label>
                    <TextInput id="up" $w={178} value={up} onChange={e => setUp(e.target.value)} />
                    <IconButton name="dbl" label="expand" />
                    <IconButton name="pin" label="pick direction" />
                    <PlainButton $w={12} aria-label="options"><Arrow /></PlainButton>
                </Field>
                <Field>
                    <label htmlFor="origin">原点</label>
                    <TextInput id="origin" $w={178} value={origin} onChange={e => setOrigin(e.target.value)} />
                    <IconButton name="dbl" label="expand" />
                    <IconButton name="pin" label="pick origin" />
                    <PlainButton $w={12} aria-label="options"><Arrow /></PlainButton>
                </Field>
                <Checks>
                    <Check><input type="checkbox" />反转水平方向</Check>
                    <Check><input type="checkbox" />使用定义的平面形心</Check>
                    <Check><input type="checkbox" defaultChecked />定向到活动视图</Check>
                </Checks>
            </Section>
            <Section title="设置" $pad="2px 10px">
                <Check><input type="checkbox" />参考面边界</Check>
            </Section>
        </Panel>
    )
}

const profile = `M558 503L561 496C571 495 582 486 591 475L596 460C604 461 610 464 618 467L672 479L692 482L690 500
    C694 519 702 532 718 538L838 561C857 564 870 556 884 536L888 520L911 526L961 534L985 535L985 550
    C989 570 1000 582 1015 588L1140 603C1160 604 1171 593 1181 573L1184 558C1197 561 1210 562 1224 563L1257 565L1282 565L1283 582
    C1290 599 1301 610 1318 615L1318 620L1284 618Q1279 617 1279 613L1278 589Q1278 586 1274 586L1187 580Q1183 580 1183 583
    L1180 606Q1179 610 1176 610L1145 608C1132 607 1127 617 1126 631L1025 619C1027 606 1023 594 1011 592L982 588Q978 587 978 583
    L979 559Q979 556 976 556L890 543Q886 542 885 546L880 567Q878 572 874 571L844 566C833 566 826 575 825 587L725 568
    C728 554 723 542 712 539L685 534Q681 533 681 529L684 505Q684 502 681 501L597 482Q593 481 591 485L585 506Q583 510 579 509Z`

// the drawing uses window coordinates, see viewBox
const Model = () => (
    <Scene viewBox="453 239 1467 756" preserveAspectRatio="xMinYMin slice">
        <path d={profile} fill="#1cc814" stroke="#ffb400" strokeWidth="3.500" strokeLinejoin="round" />
        <path d="M1348 646V537h109" fill="none" stroke="#c08a48" strokeWidth="1.200" />
        <path d="M1457 433v70" stroke="#c49a68" strokeWidth="1.500" />
        <path d="M1245 646.500h70" stroke="#a06414" strokeWidth="1.200" />
        <path d="M1457 431l-3.500 12h7z" fill="#d9981f" stroke="#6b4208" strokeWidth=".7" />
        <path d="M1243 646.500l12-3v6z" fill="#e0a830" stroke="#6b4208" strokeWidth=".7" />
        <g fill="none" stroke="#000">
            <circle cx="1457" cy="646.500" r="92" stroke="#1cc814" strokeWidth="103" />
            <circle cx="1457" cy="646.500" r="143.500" strokeWidth="1.500" />
            <path d="M1533 525A143 143 0 0 1 1533 768" stroke="#064a06" strokeWidth="4" opacity=".7" />
            <path d="M1332 577A143 143 0 0 1 1433 505" stroke="#064a06" strokeWidth="4" opacity=".6" />
            <path d="M1325 590A144 144 0 0 0 1354 747M1433 788A144 144 0 0 0 1556 751M1600 646A144 144 0 0 0 1556 542A144 144 0 0 0 1433 505" strokeWidth="2" strokeDasharray="2 1" />
            {[140, 138, 71, 68.5, 65.5, 61, 56, 52.5, 42].map(r => <circle key={r} cx="1457" cy="646.500" r={r} strokeWidth="1" />)}
            <path d="M1510 661A55 55 0 0 1 1480 696" strokeWidth="3" opacity=".7" />
            <circle cx="1457" cy="646.500" r="40.500" strokeWidth="1.500" />
        </g>
        <path d="M1410 666A51 51 0 0 0 1425 686" stroke="#65f05e" strokeWidth="3" fill="none" opacity=".7" />
        <path d="M1318 616l119 2M1318 621c8 4 11 11 11 23l101 2" stroke="#76a912" strokeWidth="2.500" fill="none" />
        <path d="M1348 646V537h109V503" stroke="#4b9a3a" strokeWidth="1" fill="none" opacity=".6" />
        <path d="M1316 646.500h105" stroke="#76781a" strokeWidth="1.200" />
        <path d="M1428 618c10 0 18 0 23-3l2 7c-12 0-20 6-21 23h-15c0-10 5-20 11-27z" fill="#1cc814" />
        <path d="M1430 618c10 1 15 0 22-3M1452 622c-12 0-20 6-21 23" stroke="#ffb400" strokeWidth="3" fill="none" />
        <path d="M1457 538v22" stroke="#7a6a14" strokeWidth="1.500" />
        <path d="M1451 586h12v20h-12z" fill="#79680f" />
        <path d="M1457 557l-10 27q10 4 20 0z" fill="#7a6a14" />
        <path d="M1455.500 570h3v35h-3z" fill="#a89a50" opacity=".7" />
        <path d="M1451 604h12v42h-12z" fill="url(#rd)" />
        <path d="M1425 644.500h28v4h-28zM1418 646.500l10-5v10z" fill="#12f012" />
        <path d="M1460 644.500h28v4h-28zM1498 646.500l-11-5v10z" fill="#f01212" />
        <circle cx="1457" cy="646.500" r="5.500" fill="#14148c" />
        <path d="M1452 638.500h10l-10 15h11" fill="none" stroke="#8a4a18" strokeWidth="1.500" />
        <g fontSize="22" textAnchor="middle">
            <g fill="#a06414"><text x="1457" y="415">X</text><text x="1218" y="654">Y</text></g>
            <text x="511" y="893" fill="#f00">X</text>
            <text x="460" y="946" fill="#0f0">Y</text>
        </g>
        <path d="M508 906h5v28h-5z" fill="url(#rd)" /><path d="M510.500 894l-5 14h10z" fill="#e01010" />
        <path d="M478 935.500h26v5h-26z" fill="url(#gn)" /><path d="M466 938l14-5.500v11z" fill="#0d0" />
        <circle cx="510" cy="938" r="5.500" fill="#0808a8" />
        <path d="M505 931h11l-11 14h11" fill="none" stroke="#1010f0" strokeWidth="2" />
        <text x="458" y="989" fontSize="21" fill="#000">475.596 mm</text>
        <path d="M1031 442v17l4-4 3 6 3-1-3-6h4z" fill="#fff" stroke="#223" strokeWidth="1" />
    </Scene>
)

const App = () => (
    <Page>
        <GlobalStyle />
        <Defs />
        <TitleBar>
            <IconButton name="logo" w={22} label="ZW3D" />
            <Divider $h={14} $m={6} />
            {['file', 'open', 'save', 'print', 'undo', 'redo', 'cycle'].map(n => <IconButton key={n} name={n} />)}
            <IconButton name="more" w={18} s={14} />
            <IconButton name="play" w={22} />
            <Title>中望3D 2022 x64 - [HL-行星架-铸件_零件60.Z3PRT]</Title>
            {['min', 'restore', 'close'].map(n => <IconButton key={n} name={n} w={30} s={18} />)}
        </TitleBar>
        <MenuRow>
            <FileTab>文件(F)</FileTab>
            {menus.map(m => <MenuTab key={m} $active={m === '造型'} $latin={/^[A-Z]/.test(m)}>{m}</MenuTab>)}
            <Spacer />
            <IconButton name="up" />
            <SearchBox>
                <input placeholder="查找命令" aria-label="查找命令" />
                <Ico name="search" s={18} />
            </SearchBox>
            <IconButton name="gear" />
            <HelpButton $w={44} aria-label="help"><Ico name="help" /><Arrow /></HelpButton>
            <IconButton name="mdimin" w={20} s={16} />
            <IconButton name="mdirest" w={20} s={16} />
            <IconButton name="mdiclose" w={22} s={16} />
        </MenuRow>
        <RibbonBar />
        <ToolRow>
            <Grip />
            <IconButton name="bulb" active />
            <IconButton name="plus" />
            <IconButton name="minus" />
            <IconButton name="pick" w={26} />
            <PlainButton $w={14} aria-label="options"><Arrow /></PlainButton>
            <IconButton name="poly" w={32} />
            <Divider />
            <IconButton name="filter" w={30} />
            <SelectBox $w={120} $mr={2}><select aria-label="filter" /><Arrow /></SelectBox>
            <IconButton name="facef" active />
            <SelectBox $w={165} $off><select aria-label="attribute" disabled /><Arrow c="#aaa" /></SelectBox>
            <IconButton name="clock" w={30} />
            <IconButton name="rot" />
            <Divider $m={3} />
            {[1, 2, 3, 4].map(n => <IconButton key={n} name="lc" s={18} />)}
            {['cur', 'rows', 'win', 'globe'].map(n => <IconButton key={n} name={n} />)}
            <Divider $m={3} />
            {['curc', 'chain', 'solid'].map(n => <IconButton key={n} name={n} />)}
            <SelectBox $w={120} $off><select aria-label="direction" disabled><option>法向</option></select><Arrow c="#aaa" /></SelectBox>
            {snapTools.map((n, i) => <IconButton key={i} name={n} />)}
        </ToolRow>
        <Main>
            <Side>
                <SideHead>
                    <span>草图</span>
                    <Spacer />
                    <IconButton name="undock" w={24} s={16} />
                    <IconButton name="close" w={24} s={18} />
                </SideHead>
                <SideBody>
                    <IconRail>
                        <RailButton $active aria-label="sketch"><svg width="32" height="32" viewBox="0 0 41 40">{pencil}</svg></RailButton>
                        {['tree', 'box', 'pict', 'user'].map(n => (
                            <RailButton key={n} aria-label={n}><svg width="30" height="30" viewBox="0 0 30 30">{tree[n]}</svg></RailButton>
                        ))}
                    </IconRail>
                    <SketchPanel />
                </SideBody>
            </Side>
            <Work>
                <DocTabs>
                    <DocTab $w={239} $pl={42}>
                        <DocLink href="#asm">HL-行星架-铸件.Z3ASM</DocLink>
                        <IconButton name="tabx" w={12} s={12} />
                    </DocTab>
                    <DocTab $w={275} $pl={36} $active>
                        <DocLink href="#prt">HL-行星架-铸件_零件60.Z3PRT</DocLink>
                        <IconButton name="tabx" w={12} s={12} />
                    </DocTab>
                    <IconButton name="add" w={32} s={16} />
                    <Spacer />
                    <IconButton name="menu" w={26} s={18} />
                </DocTabs>
                <Canvas>
                    <Model />
                    <ViewBar>
                        {viewTools.map(([n, w, drop]) => (
                            <React.Fragment key={n}>
                                <IconButton name={n} w={w} />
                                {drop && <PlainButton $w={14} $start aria-label={n + ' options'}><Arrow /></PlainButton>}
                            </React.Fragment>
                        ))}
                        <SelectBox $w={145} $off>
                            <PlainButton $w={24} disabled aria-label="visible"><Ico name="lamp" s={16} /></PlainButton>
                            <Ico name="ball" s={16} />
                            <select aria-label="layer" disabled><option>图层000</option></select>
                            <Arrow c="#aaa" />
                        </SelectBox>
                    </ViewBar>
                </Canvas>
            </Work>
        </Main>
        <StatusBar>
            <span>&lt;单击中键&gt;继续。</span>
            <Spacer />
            <Divider $h={30} $m={18} />
            <IconButton name="stTool" active />
            <IconButton name="stMon" w={36} />
            <IconButton name="stDoc" w={34} />
            <StatusInput>
                <input aria-label="message" />
                <Watermark>CSDN @山涧果子</Watermark>
            </StatusInput>
        </StatusBar>
    </Page>
)

export default App
